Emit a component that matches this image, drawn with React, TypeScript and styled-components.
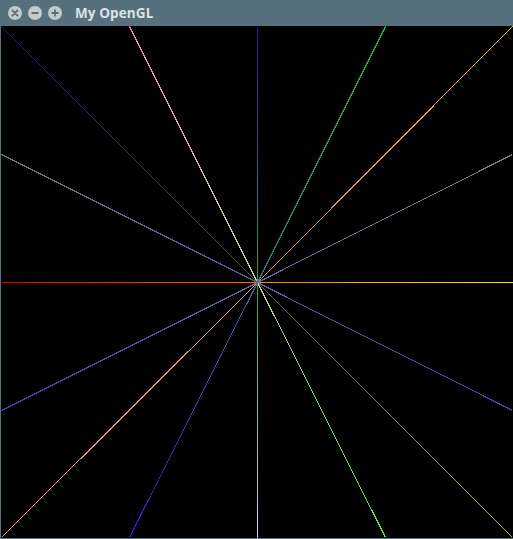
import React from 'react';
import styled, { createGlobalStyle } from 'styled-components';

const GlobalStyle = createGlobalStyle`
  html, body {
    margin: 0;
    padding: 0;
    background: #56707d;
    overflow: hidden;
  }
`;

const Window = styled.div`
  display: flex;
  flex-direction: column;
  width: 513px;
  height: 539px;
  background: #56707d;
`;

const TitleBar = styled.div`
  display: flex;
  align-items: center;
  height: 26px;
  padding-left: 8px;
  box-sizing: border-box;
`;

const Buttons = styled.div`
  display: flex;
  gap: 6px;
  margin-right: 13px;
`;

const WinButton = styled.div`
  width: 14px;
  height: 14px;
  border-radius: 50%;
  background: #c4c9cc;
  display: flex;
  align-items: center;
  justify-content: center;
`;

const Title = styled.div`
  font-family: 'Open Sans', 'DejaVu Sans', sans-serif;
  font-weight: 700;
  font-size: 13.5px;
  color: #dde2e5;
  letter-spacing: 0.1px;
`;

const CanvasFrame = styled.div`
  display: flex;
  padding: 0 0 1px 1px;
`;

const Canvas = styled.svg`
  display: block;
  background: #000;
`;

type Ray = { x: number; y: number; end: string; mid: string };

const C = 256.5;

const rays: Ray[] = [
  { x: 0.5, y: 0.5, end: '#30148c', mid: '#45503a' },
  { x: 128.5, y: 0.5, end: '#f080c4', mid: '#bcd886' },
  { x: 256.5, y: 0.5, end: '#3010a0', mid: '#20a068' },
  { x: 384.5, y: 0.5, end: '#20c040', mid: '#207e86' },
  { x: 511.5, y: 0.5, end: '#e8b430', mid: '#d8843c' },
  { x: 511.5, y: 128.5, end: '#808080', mid: '#6262a4' },
  { x: 511.5, y: 256.5, end: '#ffe810', mid: '#ff7a10' },
  { x: 511.5, y: 384.5, end: '#4444a8', mid: '#6262a4' },
  { x: 511.5, y: 511.5, end: '#a4c428', mid: '#50603c' },
  { x: 384.5, y: 511.5, end: '#58f040', mid: '#bcd886' },
  { x: 256.5, y: 511.5, end: '#c8d4f4', mid: '#20a068' },
  { x: 128.5, y: 511.5, end: '#4410d0', mid: '#4464a4' },
  { x: 0.5, y: 511.5, end: '#e89074', mid: '#e09a44' },
  { x: 0.5, y: 384.5, end: '#4444a8', mid: '#6262a4' },
  { x: 0.5, y: 256.5, end: '#dd0000', mid: '#ff6a10' },
  { x: 0.5, y: 128.5, end: '#767676', mid: '#5454a4' },
];

const CloseIcon = () => (
  <svg width="8" height="8" viewBox="0 0 8 8">
    <path d="M1.5 1.5 L6.5 6.5 M6.5 1.5 L1.5 6.5" stroke="#56707d" strokeWidth="1.8" strokeLinecap="round" />
  </svg>
);

const MinIcon = () => (
  <svg width="8" height="8" viewBox="0 0 8 8">
    <path d="M1.2 4 L6.8 4" stroke="#56707d" strokeWidth="1.8" strokeLinecap="round" />
  </svg>
);

const MaxIcon = () => (
  <svg width="8" height="8" viewBox="0 0 8 8">
    <path d="M1.2 4 L6.8 4 M4 1.2 L4 6.8" stroke="#56707d" strokeWidth="1.8" strokeLinecap="round" />
  </svg>
);

const App: React.FC = () => {
  return (
    <>
      <GlobalStyle />
      <Window>
        <TitleBar>
          <Buttons>
            <WinButton><CloseIcon /></WinButton>
            <WinButton><MinIcon /></WinButton>
            <WinButton><MaxIcon /></WinButton>
          </Buttons>
          <Title>My OpenGL</Title>
        </TitleBar>
        <CanvasFrame>
          <Canvas width="512" height="512" viewBox="0 0 512 512" shapeRendering="crispEdges">
            <defs>
              {rays.map((r, i) => (
                <linearGradient
                  key={i}
                  id={`ray${i}`}
                  gradientUnits="userSpaceOnUse"
                  x1={r.x}
                  y1={r.y}
                  x2={C}
                  y2={C}
                >
                  <stop offset="0" stopColor={r.end} />
                  <stop offset="1" stopColor={r.mid} />
                </linearGradient>
              ))}
            </defs>
            {rays.map((r, i) => (
              <line key={i} x1={r.x} y1={r.y} x2={C} y2={C} stroke={`url(#ray${i})`} strokeWidth="1" />
            ))}
          </Canvas>
        </CanvasFrame>
      </Window>
    </>
  );
};

export default App;
